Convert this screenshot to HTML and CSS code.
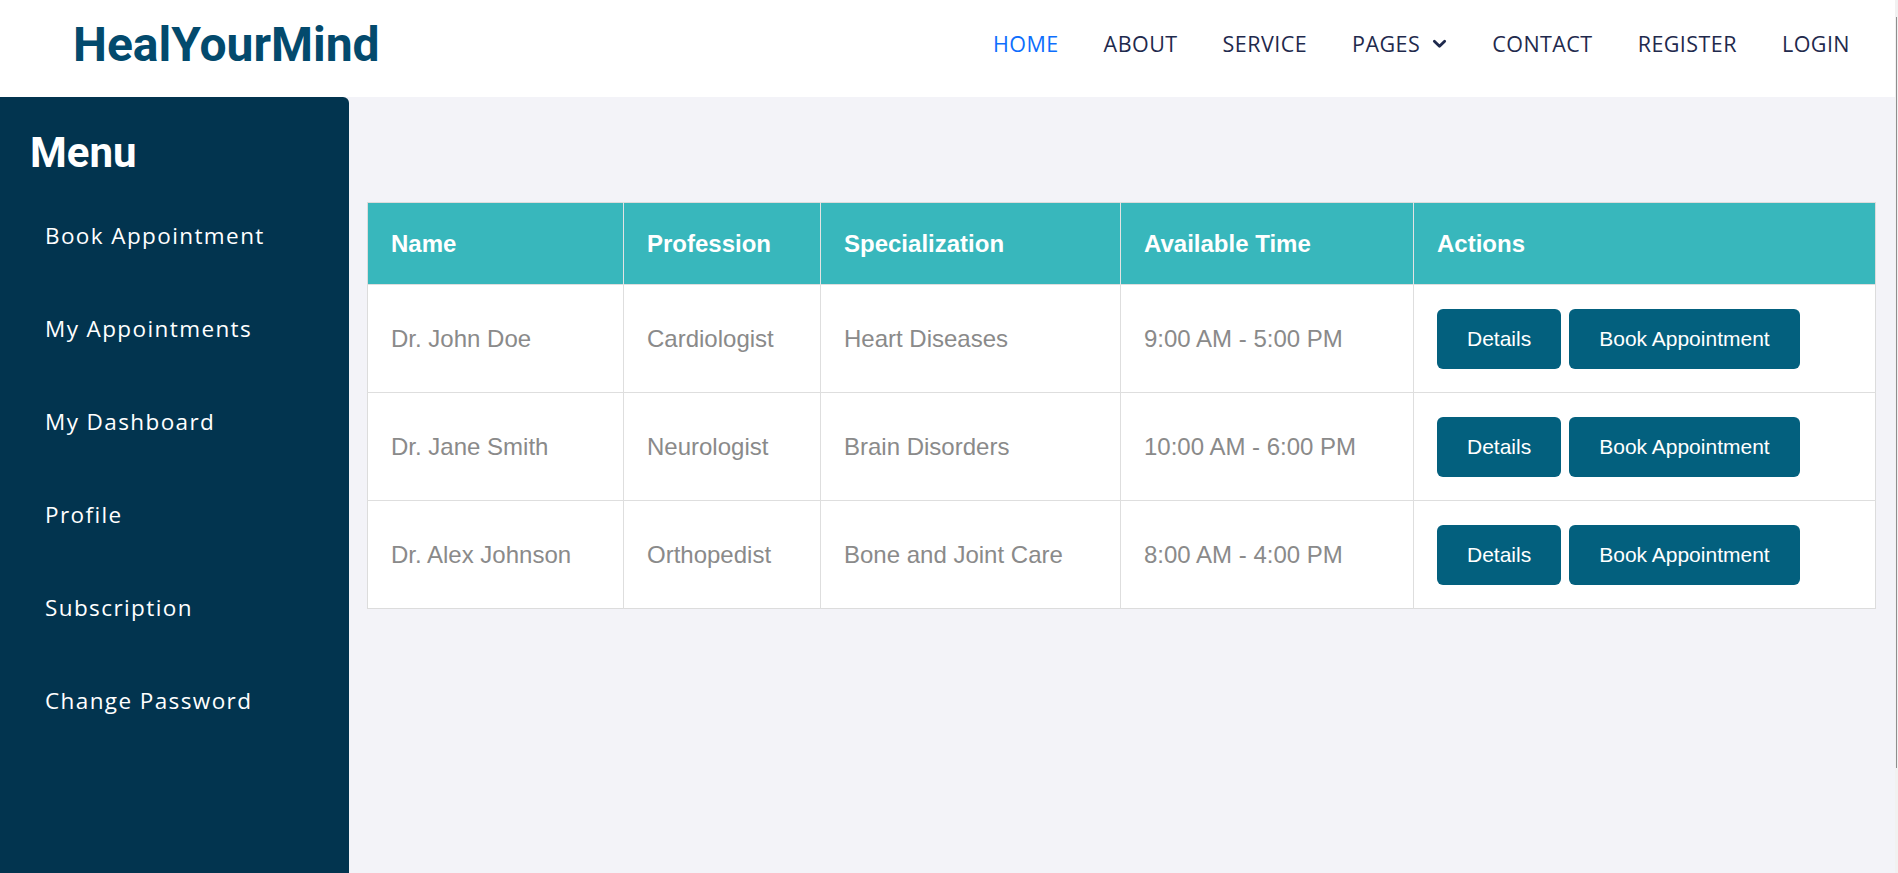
FILE: index.html
```html
<!DOCTYPE html>
<html lang="en">
<head>
<meta charset="utf-8">
<title>HealYourMind</title>
<link rel="stylesheet" href="styles.css">
</head>
<body>
<header class="topbar">
  <div class="logo">HealYourMind</div>
  <nav class="nav">
    <a class="nav-link active" href="#">HOME</a>
    <a class="nav-link" href="#">ABOUT</a>
    <a class="nav-link" href="#">SERVICE</a>
    <a class="nav-link dropdown" href="#">PAGES
      <svg class="chev" viewBox="0 0 16 16" width="15" height="15"><path d="M2.5 5.5 L8 11 L13.5 5.5" fill="none" stroke="currentColor" stroke-width="3" stroke-linecap="round" stroke-linejoin="round"/></svg>
    </a>
    <a class="nav-link" href="#">CONTACT</a>
    <a class="nav-link" href="#">REGISTER</a>
    <a class="nav-link" href="#">LOGIN</a>
  </nav>
</header>
<div class="layout">
  <aside class="sidebar">
    <h2 class="menu-title">Menu</h2>
    <ul class="menu">
      <li><a href="#">Book Appointment</a></li>
      <li><a href="#">My Appointments</a></li>
      <li><a href="#">My Dashboard</a></li>
      <li><a href="#">Profile</a></li>
      <li><a href="#">Subscription</a></li>
      <li><a href="#">Change Password</a></li>
    </ul>
  </aside>
  <main class="main">
    <table class="doctors">
      <colgroup>
        <col class="c-name"><col class="c-prof"><col class="c-spec"><col class="c-time"><col class="c-act">
      </colgroup>
      <thead>
        <tr><th>Name</th><th>Profession</th><th>Specialization</th><th>Available Time</th><th>Actions</th></tr>
      </thead>
      <tbody>
        <tr>
          <td>Dr. John Doe</td><td>Cardiologist</td><td>Heart Diseases</td><td>9:00 AM - 5:00 PM</td>
          <td><div class="actions"><button class="btn">Details</button><button class="btn">Book Appointment</button></div></td>
        </tr>
        <tr>
          <td>Dr. Jane Smith</td><td>Neurologist</td><td>Brain Disorders</td><td>10:00 AM - 6:00 PM</td>
          <td><div class="actions"><button class="btn">Details</button><button class="btn">Book Appointment</button></div></td>
        </tr>
        <tr>
          <td>Dr. Alex Johnson</td><td>Orthopedist</td><td>Bone and Joint Care</td><td>8:00 AM - 4:00 PM</td>
          <td><div class="actions"><button class="btn">Details</button><button class="btn">Book Appointment</button></div></td>
        </tr>
      </tbody>
    </table>
  </main>
</div>
<div class="scrollbar"><div class="thumb"></div></div>
</body>
</html>
```
FILE: styles.css
```css
* { box-sizing: border-box; }
html, body { height: 100%; }
body {
  margin: 0;
  padding-right: 3px;
  background: #f3f3f8;
  font-family: "Liberation Sans", Arial, sans-serif;
  overflow: hidden;
}
.topbar {
  height: 97px;
  background: #ffffff;
  display: flex;
  align-items: center;
  justify-content: space-between;
  padding: 0 45px 0 73px;
}
.logo {
  font-family: Roboto, "Liberation Sans", sans-serif;
  font-weight: 700;
  font-size: 48px;
  color: #034a6d;
  margin-top: -8px;
}
.nav {
  display: flex;
  align-items: center;
  gap: 45px;
  margin-top: -10px;
}
.nav-link {
  font-family: "Open Sans", sans-serif;
  font-size: 21.5px;
  letter-spacing: 0.45px;
  color: #1f2a4d;
  text-decoration: none;
  display: flex;
  align-items: center;
  gap: 12px;
}
.nav-link.active { color: #0d6efd; }
.chev { display: block; }
.layout {
  display: flex;
  height: calc(100% - 97px);
}
.sidebar {
  width: 349px;
  flex: none;
  background: #02344f;
  border-top-right-radius: 6px;
  padding: 32px 0 0 30px;
  color: #fff;
}
.menu-title {
  margin: 0;
  font-family: Roboto, sans-serif;
  font-weight: 700;
  font-size: 42px;
  line-height: 48px;
}
.menu {
  list-style: none;
  margin: 12px 0 0;
  padding: 0 0 0 15px;
}
.menu li a {
  display: block;
  height: 93px;
  line-height: 93px;
  font-family: "Open Sans", sans-serif;
  font-size: 22.5px;
  letter-spacing: 1.4px;
  color: #ffffff;
  text-decoration: none;
}
.main {
  flex: 1;
  padding: 105px 19px 0 18px;
}
.doctors {
  width: 100%;
  border-collapse: collapse;
  table-layout: fixed;
  background: #fff;
  border: 1px solid #dcdcdc;
}
.c-name { width: 256px; }
.c-prof { width: 197px; }
.c-spec { width: 300px; }
.c-time { width: 293px; }
.doctors th {
  background: #38b7bc;
  color: #fff;
  font-weight: 700;
  font-size: 24px;
  text-align: left;
  padding: 24px 23px;
  line-height: 33px;
  border-left: 1px solid #e3e3e3;
}
.doctors th:first-child, .doctors td:first-child { border-left: none; }
.doctors td {
  color: #8a8a8a;
  font-size: 24px;
  line-height: 33px;
  padding: 23.5px 23px;
  border-top: 1px solid #dedede;
  border-left: 1px solid #dedede;
  vertical-align: middle;
  white-space: nowrap;
}
.actions {
  display: flex;
  gap: 8px;
}
.btn {
  font-family: "Liberation Sans", Arial, sans-serif;
  font-size: 21px;
  line-height: 31px;
  padding: 14.5px 30px;
  color: #fff;
  background: #03607e;
  border: none;
  border-radius: 6px;
}
.scrollbar {
  position: absolute;
  top: 0;
  right: 0;
  width: 3px;
  height: 100%;
  background: #f1f1f1;
}
.thumb {
  position: absolute;
  top: 17px;
  left: 1px;
  width: 1px;
  height: 751px;
  background: #8e8e8e;
}
```
